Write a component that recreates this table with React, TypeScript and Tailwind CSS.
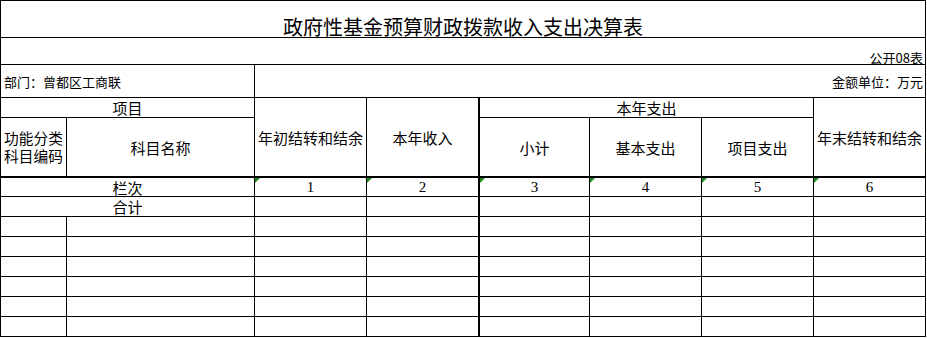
import React from 'react';

const cell = 'border-r border-b border-black flex items-center justify-center';

const Flag: React.FC = () => (
  <svg className="absolute left-0 top-0" width="5" height="5" viewBox="0 0 5 5">
    <polygon points="0,0 5,0 0,5" fill="#1f8a1f" />
  </svg>
);

const App: React.FC = () => {
  const dataRows = [0, 1, 2, 3, 4, 5];

  return (
    <div className="bg-white w-[927px] h-[338px] text-black font-['Noto_Sans_CJK_SC','Noto_Sans',sans-serif]">
      <div className="grid w-[926px] grid-cols-[66px_188px_112px_113px_110px_112px_112px_112px] grid-rows-[37px_27px_33px_20px_60px_19px_20px_20px_20px_20px_20px_20px_20px] border-l border-t border-black">
        {/* title */}
        <div className="col-span-8 border-r border-b border-black flex items-end justify-center text-[20px] leading-none">
          政府性基金预算财政拨款收入支出决算表
        </div>
        <div className="col-span-8 border-r border-b border-black flex items-end justify-end pr-[2px] text-[13px] leading-none">
          公开08表
        </div>

        {/* dept / unit */}
        <div className="col-span-2 border-r border-b border-black flex items-center pl-[3px] text-[13px] leading-none">
          部门：曾都区工商联
        </div>
        <div className="col-span-6 border-r border-b border-black flex items-center justify-end pr-[2px] text-[13px] leading-none">
          金额单位：万元
        </div>

        {/* header */}
        <div className={`${cell} col-span-2 text-[15px] leading-none`}>项目</div>
        <div className={`${cell} row-span-2 border-b-2 text-[15px] leading-none`}>年初结转和结余</div>
        <div className="row-span-2 border-r-2 border-b-2 border-black flex items-center justify-center text-[15px] leading-none">
          本年收入
        </div>
        <div className={`${cell} col-span-3 text-[15px] leading-none`}>本年支出</div>
        <div className={`${cell} row-span-2 border-b-2 text-[15px] leading-none`}>年末结转和结余</div>

        <div className={`${cell} border-b-2 flex-col text-[14.7px] leading-[18px]`}>
          <span>功能分类</span>
          <span>科目编码</span>
        </div>
        <div className={`${cell} border-b-2 text-[15px] leading-none`}>科目名称</div>
        <div className={`${cell} border-b-2 text-[15px] leading-none`}>小计</div>
        <div className={`${cell} border-b-2 text-[15px] leading-none`}>基本支出</div>
        <div className={`${cell} border-b-2 text-[15px] leading-none`}>项目支出</div>

        {/* column numbers */}
        <div className={`${cell} col-span-2 text-[15px] leading-none`}>栏次</div>
        {[1, 2, 3, 4, 5, 6].map((n) => (
          <div
            key={n}
            className={`${cell} relative font-['Liberation_Serif',serif] text-[15px] leading-none ${n === 2 ? 'border-r-2' : ''}`}
          >
            <Flag />
            {n}
          </div>
        ))}

        {/* total */}
        <div className={`${cell} col-span-2 text-[15px] leading-none`}>合计</div>
        {[1, 2, 3, 4, 5, 6].map((n) => (
          <div key={n} className={`${cell} ${n === 2 ? 'border-r-2' : ''}`} />
        ))}

        {/* empty rows */}
        {dataRows.map((r) =>
          [0, 1, 2, 3, 4, 5, 6, 7].map((c) => (
            <div key={`${r}-${c}`} className={`${cell} ${c === 3 ? 'border-r-2' : ''}`} />
          ))
        )}
      </div>
    </div>
  );
};

export default App;
